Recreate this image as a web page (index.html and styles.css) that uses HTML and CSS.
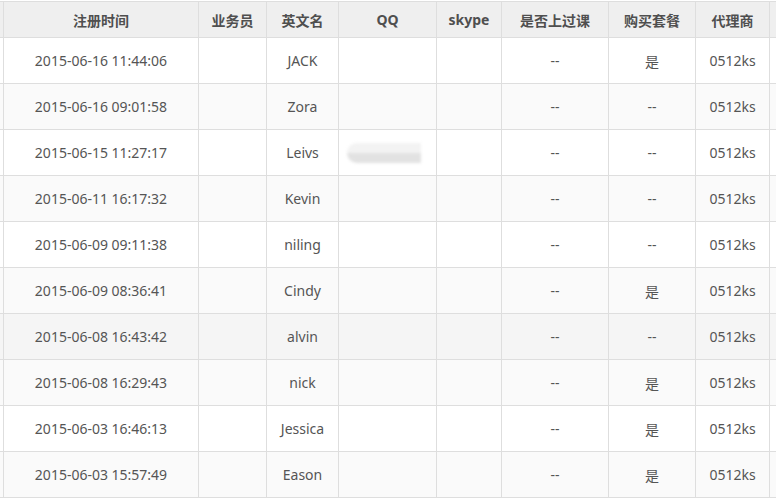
FILE: index.html
```html
<!DOCTYPE html>
<html lang="zh-CN">
<head>
<meta charset="utf-8">
<title>用户列表</title>
<link rel="stylesheet" href="styles.css">
</head>
<body>
<div class="wrap">
  <table class="grid">
    <colgroup>
      <col class="c-pre">
      <col class="c-time">
      <col class="c-sales">
      <col class="c-name">
      <col class="c-qq">
      <col class="c-skype">
      <col class="c-class">
      <col class="c-buy">
      <col class="c-agent">
      <col class="c-post">
    </colgroup>
    <thead>
      <tr>
        <th></th>
        <th>注册时间</th>
        <th>业务员</th>
        <th>英文名</th>
        <th>QQ</th>
        <th>skype</th>
        <th>是否上过课</th>
        <th>购买套餐</th>
        <th>代理商</th>
        <th></th>
      </tr>
    </thead>
    <tbody>
      <tr><td></td><td>2015-06-16 11:44:06</td><td></td><td>JACK</td><td></td><td></td><td>--</td><td>是</td><td>0512ks</td><td></td></tr>
      <tr><td></td><td>2015-06-16 09:01:58</td><td></td><td>Zora</td><td></td><td></td><td>--</td><td>--</td><td>0512ks</td><td></td></tr>
      <tr><td></td><td>2015-06-15 11:27:17</td><td></td><td>Leivs</td><td><span class="blur"></span></td><td></td><td>--</td><td>--</td><td>0512ks</td><td></td></tr>
      <tr><td></td><td>2015-06-11 16:17:32</td><td></td><td>Kevin</td><td></td><td></td><td>--</td><td>--</td><td>0512ks</td><td></td></tr>
      <tr><td></td><td>2015-06-09 09:11:38</td><td></td><td>niling</td><td></td><td></td><td>--</td><td>--</td><td>0512ks</td><td></td></tr>
      <tr><td></td><td>2015-06-09 08:36:41</td><td></td><td>Cindy</td><td></td><td></td><td>--</td><td>是</td><td>0512ks</td><td></td></tr>
      <tr class="hover"><td></td><td>2015-06-08 16:43:42</td><td></td><td>alvin</td><td></td><td></td><td>--</td><td>--</td><td>0512ks</td><td></td></tr>
      <tr><td></td><td>2015-06-08 16:29:43</td><td></td><td>nick</td><td></td><td></td><td>--</td><td>是</td><td>0512ks</td><td></td></tr>
      <tr><td></td><td>2015-06-03 16:46:13</td><td></td><td>Jessica</td><td></td><td></td><td>--</td><td>是</td><td>0512ks</td><td></td></tr>
      <tr><td></td><td>2015-06-03 15:57:49</td><td></td><td>Eason</td><td></td><td></td><td>--</td><td>是</td><td>0512ks</td><td></td></tr>
    </tbody>
  </table>
</div>
</body>
</html>
```

FILE: styles.css
```css
html, body {
  margin: 0;
  padding: 0;
  background: #fff;
}
.wrap {
  width: 776px;
  height: 499px;
  overflow: hidden;
  padding-top: 1px;
  box-sizing: border-box;
}
.grid {
  border-collapse: collapse;
  table-layout: fixed;
  width: 879px;
  margin-left: -50px;
  font-family: "Noto Sans", "Noto Sans CJK SC", sans-serif;
  font-size: 14px;
  color: #555;
}
.c-pre { width: 53px; }
.c-time { width: 195px; }
.c-sales { width: 68px; }
.c-name { width: 72px; }
.c-qq { width: 98px; }
.c-skype { width: 65px; }
.c-class { width: 107px; }
.c-buy { width: 87px; }
.c-agent { width: 74px; }
.c-post { width: 60px; }
.grid th, .grid td {
  border: 1px solid #dedede;
  padding: 0;
  text-align: center;
  vertical-align: middle;
  white-space: nowrap;
  overflow: hidden;
}
.grid th {
  height: 35px;
  background: #efefef;
  font-weight: bold;
  color: #4f4f4f;
}
.grid td {
  height: 45px;
}
.grid tbody tr:nth-child(even) td {
  background: #fafafa;
}
.grid tbody tr.hover td {
  background: #f5f5f5;
}
.blur {
  display: inline-block;
  vertical-align: middle;
  width: 74px;
  height: 20px;
  margin-left: -8px;
  border-radius: 10px 0 0 10px;
  background: linear-gradient(#f3f3f3 0, #f3f3f3 48%, #e2e2e2 52%, #e2e2e2 100%);
  filter: blur(1.5px);
}
```
